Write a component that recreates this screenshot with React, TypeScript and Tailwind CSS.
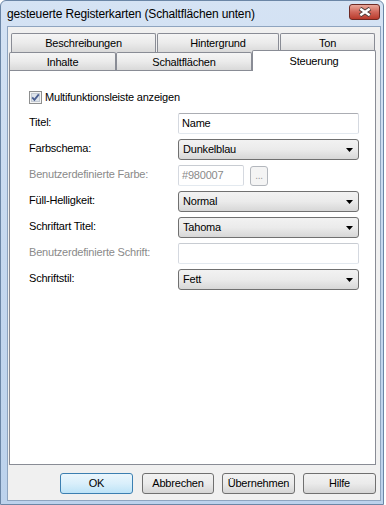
// Win7-style property dialog: "gesteuerte Registerkarten" with two tab rows and the Steuerung page

import { clsx as cn } from 'clsx';

const tabBase =
  'flex items-center justify-center border border-[#898c95] rounded-t-[2px] bg-gradient-to-b from-[#f5f5f5] via-[#ebebeb] to-[#d9d9d9] text-[11px] leading-[14px] text-black';

const inputBase = 'h-[21px] border border-[#abadb3] border-b-[#e3e9ef] border-x-[#d5d9e0] rounded-[2px] bg-white px-[3px] text-[11px] leading-[19px] flex items-center';

function Select({ value }: { value: string }) {
  return (
    <div className="h-[21px] border border-[#707070] rounded-[3px] bg-gradient-to-b from-[#f2f2f2] via-[#ebebeb] to-[#d7d7d7] flex items-center pl-[4px] pr-[5px] text-[11px] text-black">
      <span className="flex-1">{value}</span>
      <svg width="7" height="4" viewBox="0 0 7 4">
        <polygon points="0,0 7,0 3.5,4" fill="#000" />
      </svg>
    </div>
  );
}

function Label({ text, disabled }: { text: string; disabled?: boolean }) {
  return (
    <div className={cn('pt-[2px] text-[11px] leading-[14px]', disabled ? 'text-[#8a8a8a]' : 'text-black')}>
      {text}
    </div>
  );
}

function Button({ label, primary, className }: { label: string; primary?: boolean; className?: string }) {
  return (
    <div
      className={cn(
        'h-[21px] flex items-center justify-center rounded-[3px] border text-[11px] text-black',
        primary
          ? 'border-[#3c7fb1] bg-gradient-to-b from-[#ebf6fd] via-[#d9effb] to-[#bde3f7]'
          : 'border-[#707070] bg-gradient-to-b from-[#f2f2f2] via-[#ebebeb] to-[#d5d5d5]',
        className
      )}
    >
      {label}
    </div>
  );
}

export default function App() {
  return (
    <div className="w-[386px] h-[505px] bg-white font-['Liberation_Sans',Arial,sans-serif] tracking-[-0.2px] overflow-hidden">
      <div className="w-[384px] h-[505px] rounded-t-[6px] border border-[#6b86a6] bg-gradient-to-b from-[#d5e3f4] via-[#c5d8ef] to-[#bcd2ec] flex flex-col">
        {/* title bar */}
        <div className="h-[25px] flex items-center pl-[6px] pr-[3px]">
          <span className="flex-1 text-[12px] tracking-[-0.15px] text-black pt-[1px]">
            gesteuerte Registerkarten (Schaltflächen unten)
          </span>
          <div className="w-[31px] h-[16px] mt-[-3px] rounded-[3px] border border-[#6e2a24] bg-gradient-to-b from-[#e8a89c] via-[#d0665a] to-[#b8392b] flex items-center justify-center">
            <svg width="14" height="10" viewBox="0 0 14 10">
              <path d="M2 1.5 L12 8.5 M12 1.5 L2 8.5" stroke="#4a3a38" strokeWidth="4.2" />
              <path d="M2.3 1.8 L11.7 8.2 M11.7 1.8 L2.3 8.2" stroke="#ffffff" strokeWidth="2.4" />
            </svg>
          </div>
        </div>

        {/* client area */}
        <div className="ml-[6px] w-[374px] h-[475px] border border-[#8ea4bf] bg-[#f0f0f0] flex flex-col">
          {/* tabs */}
          <div className="pt-[6px]">
            <div className="flex h-[19px] ml-[3px]">
              <div className={cn(tabBase, 'w-[145px] border-b-0')}>Beschreibungen</div>
              <div className={cn(tabBase, 'w-[122px] ml-[1px] border-b-0')}>Hintergrund</div>
              <div className={cn(tabBase, 'w-[95px] ml-[1px] border-b-0')}>Ton</div>
            </div>
            <div className="flex items-start h-[18px] ml-[1px]">
              <div className={cn(tabBase, 'w-[107px] h-[18px] border-b-0')}>Inhalte</div>
              <div className={cn(tabBase, 'w-[136px] h-[18px] border-b-0')}>Schaltflächen</div>
              <div className="relative z-10 w-[124px] h-[21px] -mt-[2px] border border-b-0 border-[#898c95] rounded-t-[2px] bg-white flex justify-center pt-[3px] text-[11px] leading-[14px] text-black">
                Steuerung
              </div>
            </div>
          </div>

          {/* page */}
          <div className="ml-[1px] w-[367px] h-[395px] border border-[#898c95] bg-white pl-[19px] pt-[20px]">
            <div className="flex items-center gap-[3px] h-[13px]">
              <svg width="13" height="13" viewBox="0 0 13 13">
                <rect x="0.5" y="0.5" width="12" height="12" fill="#f4f4f4" stroke="#8e8f8f" />
                <rect x="2.5" y="2.5" width="8" height="8" fill="#dde3ea" stroke="#c3cad3" />
                <path d="M3.2 6.4 L5.4 8.8 L9.8 3.4" fill="none" stroke="#4a5e91" strokeWidth="1.8" />
              </svg>
              <span className="text-[11px] text-black">Multifunktionsleiste anzeigen</span>
            </div>

            <div className="mt-[9px] grid grid-cols-[149px_181px] gap-y-[5px]">
              <Label text="Titel:" />
              <div className={inputBase}>Name</div>

              <Label text="Farbschema:" />
              <Select value="Dunkelblau" />

              <Label text="Benutzerdefinierte Farbe:" disabled />
              <div className="flex items-start gap-[6px]">
                <div className={cn(inputBase, 'w-[66px] h-[20px] text-[#8a8a8a] border-[#c8ccd2]')}>#980007</div>
                <div className="w-[18px] h-[20px] mt-[1px] rounded-[3px] border border-[#b3b7bd] bg-[#f4f4f4] text-[#9a9a9a] text-[10px] flex items-end justify-center pb-[4px] leading-none">
                  ...
                </div>
              </div>

              <Label text="Füll-Helligkeit:" />
              <Select value="Normal" />

              <Label text="Schriftart Titel:" />
              <Select value="Tahoma" />

              <Label text="Benutzerdefinierte Schrift:" disabled />
              <div className={cn(inputBase, 'border-[#c8ccd2]')} />

              <Label text="Schriftstil:" />
              <Select value="Fett" />
            </div>
          </div>

          {/* buttons */}
          <div className="mt-[8px] flex justify-end w-[368px] gap-[8px]">
            <Button label="OK" primary className="w-[73px]" />
            <Button label="Abbrechen" className="w-[72px] ml-[1px]" />
            <Button label="Übernehmen" className="w-[73px]" />
            <Button label="Hilfe" className="w-[73px]" />
          </div>
        </div>
      </div>
    </div>
  );
}
